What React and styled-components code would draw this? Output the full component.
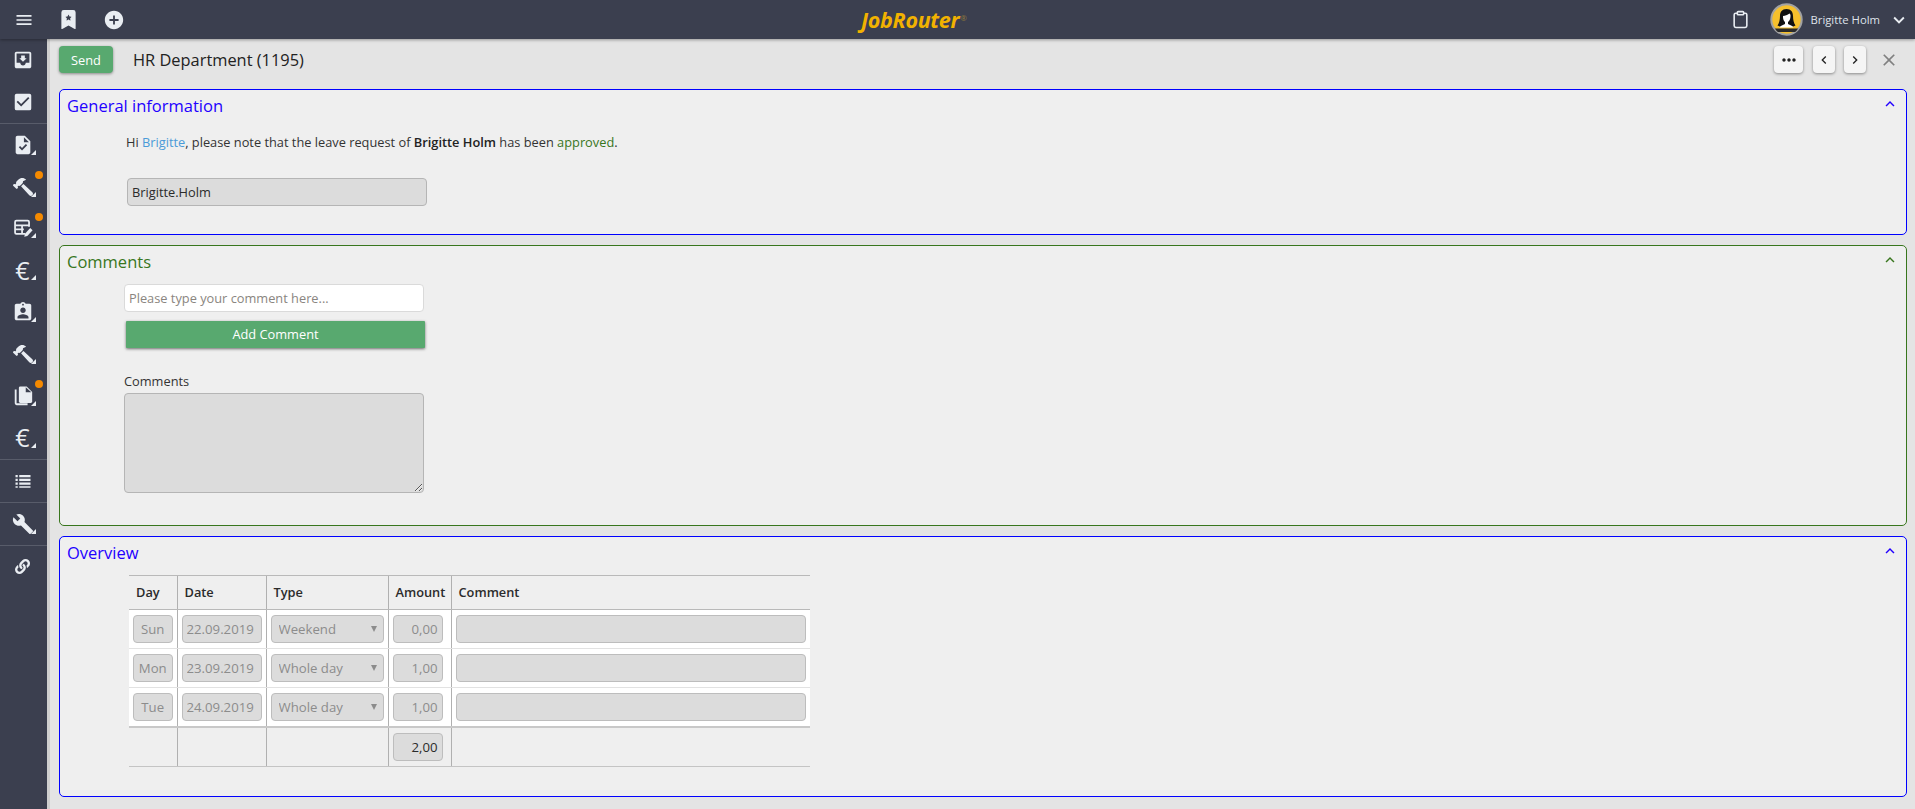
import styled, { createGlobalStyle } from 'styled-components';
import {
  MdMenu,
  MdMoveToInbox,
  MdCheckBox,
  MdTask,
  MdAssignmentInd,
  MdBuild,
  MdAddCircle,
  MdKeyboardArrowDown,
  MdKeyboardArrowUp,
  MdKeyboardArrowLeft,
  MdKeyboardArrowRight,
  MdMoreHoriz,
  MdClose,
} from 'react-icons/md';
import { BsBookmarkStarFill } from 'react-icons/bs';
import { FaHammer, FaLink } from 'react-icons/fa';
import { LuClipboard } from 'react-icons/lu';

const GlobalStyle = createGlobalStyle`
  html, body {
    margin: 0;
    height: 100%;
    overflow: hidden;
    background: #e4e4e4;
    font-family: "Open Sans", "Liberation Sans", sans-serif;
    font-size: 12.8px;
    color: #2b2b2b;
  }
  * { box-sizing: border-box; }
`;

const Page = styled.div`
  display: flex;
  flex-direction: column;
  height: 809px;
`;

const TopBar = styled.header`
  display: grid;
  grid-template-columns: 861px auto 1fr;
  align-items: center;
  height: 39px;
  flex: none;
  background: #3b3f4f;
  color: #e9edf2;
  box-shadow: 0 1px 3px rgba(0, 0, 0, 0.35);
  position: relative;
  z-index: 2;
`;

const TopLeft = styled.div`
  display: flex;
  align-items: center;
`;

const TopSlot = styled.div`
  display: flex;
  align-items: center;
  justify-content: center;
  width: ${(props) => props.$width}px;
  margin-right: ${(props) => props.$gap || 0}px;
  font-size: ${(props) => props.$size}px;
`;

const Logo = styled.div`
  font-size: 21.5px;
  font-weight: 700;
  font-style: italic;
  color: #f2b200;
  letter-spacing: -0.3px;

  sup {
    font-size: 8px;
    font-style: normal;
    font-weight: 400;
    color: #8f7a3a;
    margin-left: 1px;
    vertical-align: 7px;
    line-height: 0;
  }
`;

const TopRight = styled.div`
  display: flex;
  align-items: center;
  justify-content: flex-end;
  padding-right: 4px;
`;

const UserName = styled.span`
  font-size: 11.3px;
  margin: 0 7px;
  color: #dfe3ea;
`;

const Body = styled.div`
  display: flex;
  flex: 1;
  min-height: 0;
`;

const Sidebar = styled.nav`
  width: 50px;
  flex: none;
  background: #3b3f4f;
  border-right: 3px solid #cfcfcf;
`;

const SideGroup = styled.div`
  border-bottom: ${(props) => (props.$last ? 'none' : '1px solid #585c6a')};
`;

const SideItem = styled.div`
  position: relative;
  display: flex;
  align-items: center;
  justify-content: center;
  width: 47px;
  height: 41.9px;
  font-size: ${(props) => props.$size || 22}px;
  color: #e9edf2;
  padding-right: 2px;

  &::after {
    content: '';
    display: ${(props) => (props.$sub ? 'block' : 'none')};
    position: absolute;
    right: 11px;
    bottom: 11px;
    border-style: solid;
    border-width: 0 0 5px 5px;
    border-color: transparent transparent #e9edf2 transparent;
  }
`;

const Badge = styled.span`
  position: absolute;
  top: 5px;
  right: 4px;
  width: 8px;
  height: 8px;
  border-radius: 50%;
  background: #f58a00;
`;

const Euro = styled.span`
  font-size: 25px;
  line-height: 1;
  font-family: "Open Sans", sans-serif;
  color: #e9edf2;
`;

const Hammer = styled(FaHammer)`
  transform: scaleX(-1);
`;

const Main = styled.main`
  flex: 1;
  min-width: 0;
  padding: 7px 8px 0 9px;
`;

const Toolbar = styled.div`
  display: flex;
  align-items: center;
  height: 27px;
  margin-bottom: 16px;
`;

const SendButton = styled.button`
  width: 54px;
  height: 27px;
  border: 0;
  border-radius: 4px;
  background: #58a96f;
  color: #fff;
  font: inherit;
  box-shadow: 0 1px 3px rgba(0, 0, 0, 0.4);
`;

const Title = styled.h1`
  flex: 1;
  margin: 0 0 0 20px;
  font-size: 16.4px;
  font-weight: 400;
  color: #222;
`;

const ToolButton = styled.button`
  display: flex;
  align-items: center;
  justify-content: center;
  width: ${(props) => props.$width}px;
  height: 27px;
  margin-left: ${(props) => props.$gap}px;
  padding: 0;
  border: 0;
  border-radius: 4px;
  background: #f5f5f5;
  color: #222;
  font-size: ${(props) => props.$size || 16}px;
  box-shadow: 0 1px 3px rgba(0, 0, 0, 0.4);
`;

const CloseButton = styled.div`
  display: flex;
  justify-content: center;
  width: 23px;
  margin: 0 7px 0 11px;
  font-size: 20px;
  color: #808080;
`;

const Section = styled.section`
  height: ${(props) => props.$height}px;
  margin-bottom: 10px;
  border: 1px solid ${(props) => props.$color};
  border-radius: 5px;
  background: #efefef;
`;

const SectionHead = styled.div`
  display: flex;
  align-items: center;
  justify-content: space-between;
  height: 33px;
  padding: 0 7px;
  color: ${(props) => props.$color};

  h2 {
    margin: -3px 0 0;
    font-size: 16.5px;
    font-weight: 500;
  }

  svg {
    font-size: 18px;
    margin-top: -5px;
  }
`;

const Message = styled.p`
  margin: 10px 0 0 66px;
  height: 18px;
  line-height: 18px;
  color: #333;

  b {
    font-weight: 600;
    color: #222;
  }
`;

const Name = styled.span`
  color: #4b9bd8;
`;

const Approved = styled.span`
  color: #38761d;
`;

const Field = styled.input`
  display: block;
  width: 300px;
  height: 28px;
  padding: 0 4px;
  margin-left: ${(props) => props.$left}px;
  margin-top: ${(props) => props.$top}px;
  border: 1px solid ${(props) => (props.disabled ? '#b5b5b5' : '#dadada')};
  border-radius: 4px;
  background: ${(props) => (props.disabled ? '#dcdcdc' : '#fff')};
  color: #2b2b2b;
  font: inherit;
  opacity: 1;

  &::placeholder {
    color: #8a8580;
  }
`;

const AddButton = styled.button`
  display: block;
  width: 299px;
  height: 27px;
  margin: 9px 0 0 66px;
  padding: 0 0 2px;
  border: 0;
  border-radius: 1px;
  background: #58a96f;
  color: #fff;
  font: inherit;
  font-weight: 500;
  box-shadow: 0 1px 3px rgba(0, 0, 0, 0.55);
`;

const FieldLabel = styled.label`
  display: block;
  margin: 24px 0 3px 64px;
  height: 18px;
  line-height: 18px;
  color: #333;
`;

const Notes = styled.textarea`
  display: block;
  width: 300px;
  height: 100px;
  margin-left: 64px;
  border: 1px solid #b5b5b5;
  border-radius: 4px;
  background: #dcdcdc;
  font: inherit;
`;

const Table = styled.table`
  table-layout: fixed;
  width: 681px;
  margin: 5px 0 0 69px;
  border-collapse: collapse;
`;

const HeadCell = styled.th`
  height: 34px;
  padding: 0 6px 2px 7px;
  text-align: left;
  font-size: 12.8px;
  font-weight: 600;
  color: #2b2b2b;
  border-top: 1px solid #b9b9b9;
  border-bottom: 1px solid #b9b9b9;
  border-left: ${(props) => (props.$first ? '0' : '1px solid #b0b0b0')};
`;

const Cell = styled.td`
  height: ${(props) => (props.$total ? 40 : 39)}px;
  padding: 0 4px;
  background: ${(props) => (props.$total ? 'transparent' : '#fff')};
  border-left: ${(props) => (props.$first ? '0' : '1px solid #b0b0b0')};
  border-bottom: 1px solid ${(props) => (props.$total ? '#c4c4c4' : '#e2e2e2')};
`;

const TotalRow = styled.tr`
  border-top: 2px solid #c8c8c8;
`;

const CellField = styled.input`
  display: block;
  width: ${(props) => props.$width || '100%'};
  height: 28px;
  padding: 0 4px;
  border: 1px solid #bdbdbd;
  border-radius: 4px;
  background: #dcdcdc;
  font: inherit;
  font-size: 13.2px;
  color: ${(props) => (props.$strong ? '#2b2b2b' : '#8c8c8c')};
  text-align: ${(props) => props.$align || 'left'};
  opacity: 1;
`;

const TypeSelect = styled.select`
  display: block;
  width: 100%;
  height: 28px;
  padding: 0 0 0 7px;
  border: 1px solid #bdbdbd;
  border-radius: 4px;
  background: #dcdcdc;
  font: inherit;
  font-size: 13.2px;
  color: #8c8c8c;
  appearance: none;
  opacity: 1;
`;

const SelectWrap = styled.div`
  position: relative;

  &::after {
    content: '';
    position: absolute;
    right: 7px;
    top: 11px;
    border-style: solid;
    border-width: 6px 3px 0 3px;
    border-color: #8c8c8c transparent transparent transparent;
  }
`;

const rows = [
  { day: 'Sun', date: '22.09.2019', type: 'Weekend', amount: '0,00' },
  { day: 'Mon', date: '23.09.2019', type: 'Whole day', amount: '1,00' },
  { day: 'Tue', date: '24.09.2019', type: 'Whole day', amount: '1,00' },
];

function TableEditIcon() {
  return (
    <svg width="1em" height="1em" viewBox="0 0 24 24" fill="none" stroke="currentColor" strokeWidth="2">
      <path d="M15 18H5a1.500 1.500 0 0 1-1.500-1.500v-12A1.500 1.500 0 0 1 5 3h13a1.500 1.500 0 0 1 1.500 1.500V10" />
      <path d="M3.500 8.500h16M3.500 13h10M11.500 8.500V18" />
      <path d="M14 21.500l.8-3.500 6-6.500 2.700 2.500-6 6.500z" fill="currentColor" stroke="none" />
    </svg>
  );
}

function FilesIcon() {
  return (
    <svg width="1em" height="1em" viewBox="0 0 24 24" fill="currentColor">
      <path d="M3 5h2v15h12v2H5a2 2 0 0 1-2-2z" />
      <path d="M9 1.500h7l6 6V18a1.500 1.500 0 0 1-1.500 1.500H9A1.500 1.500 0 0 1 7.500 18V3A1.500 1.500 0 0 1 9 1.500z" />
      <path d="M15 2.500v5.500h6z" fill="#3b3f4f" />
    </svg>
  );
}

function ListIcon() {
  return (
    <svg width="1em" height="1em" viewBox="0 0 24 24" fill="currentColor">
      <path d="M2 4h3v3H2zM7 4h15v3H7zM2 9h3v3H2zM7 9h15v3H7zM2 14h3v3H2zM7 14h15v3H7zM2 19h3v2H2zM7 19h15v2H7z" />
    </svg>
  );
}

function Avatar() {
  return (
    <svg width="33" height="33" viewBox="0 0 33 33">
      <circle cx="16.5" cy="16.5" r="15.200" fill="#f6c02c" stroke="#a2a2a2" strokeWidth="2" />
      <path
        d="M16.500 6c-4.500 0-6.500 3-6.500 7 0 4-1 7.500-2.500 9.500l3.500 1.500h11l3.500-1.500c-1.500-2-2.500-5.500-2.500-9.500 0-4-2-7-6.500-7z"
        fill="#111"
      />
      <path
        d="M13 13c2 0 4.500-1 6.500-2.500 1 .8 1 1.500 1 2.500 0 3-1 5-2.500 6v2c2 1 4.500 1.500 5.500 3.500H9.500c1-2 3.500-2.500 5.500-3.500v-2c-1.500-1-2.200-3.500-2-6z"
        fill="#fff"
      />
      <path d="M5 25.500h23c-1 1.800-2 3-3 3.500H8c-1-.5-2-1.700-3-3.500z" fill="#2a2a2a" />
    </svg>
  );
}

export default function App() {
  return (
    <Page>
      <GlobalStyle />
      <TopBar>
        <TopLeft>
          <TopSlot $width={47} $size={20}>
            <MdMenu />
          </TopSlot>
          <TopSlot $width={43} $size={19}>
            <BsBookmarkStarFill />
          </TopSlot>
          <TopSlot $width={47} $size={22}>
            <MdAddCircle />
          </TopSlot>
        </TopLeft>
        <Logo>
          JobRouter<sup>®</sup>
        </Logo>
        <TopRight>
          <TopSlot $width={30} $size={19} $gap={15}>
            <LuClipboard />
          </TopSlot>
          <TopSlot $width={33} $size={12}>
            <Avatar />
          </TopSlot>
          <UserName>Brigitte Holm</UserName>
          <TopSlot $width={24} $size={22}>
            <MdKeyboardArrowDown />
          </TopSlot>
        </TopRight>
      </TopBar>
      <Body>
        <Sidebar>
          <SideGroup>
            <SideItem>
              <MdMoveToInbox />
            </SideItem>
            <SideItem>
              <MdCheckBox />
            </SideItem>
          </SideGroup>
          <SideGroup>
            <SideItem $sub>
              <MdTask />
            </SideItem>
            <SideItem $sub $size={20}>
              <Hammer />
              <Badge />
            </SideItem>
            <SideItem $sub $size={21}>
              <TableEditIcon />
              <Badge />
            </SideItem>
            <SideItem $sub>
              <Euro>€</Euro>
            </SideItem>
            <SideItem $sub>
              <MdAssignmentInd />
            </SideItem>
            <SideItem $sub $size={20}>
              <Hammer />
            </SideItem>
            <SideItem $sub>
              <FilesIcon />
              <Badge />
            </SideItem>
            <SideItem $sub>
              <Euro>€</Euro>
            </SideItem>
          </SideGroup>
          <SideGroup>
            <SideItem $size={18}>
              <ListIcon />
            </SideItem>
          </SideGroup>
          <SideGroup>
            <SideItem $sub>
              <MdBuild />
            </SideItem>
          </SideGroup>
          <SideGroup $last>
            <SideItem $size={15}>
              <FaLink />
            </SideItem>
          </SideGroup>
        </Sidebar>
        <Main>
          <Toolbar>
            <SendButton>Send</SendButton>
            <Title>HR Department (1195)</Title>
            <ToolButton $width={29} $gap={0} $size={20}>
              <MdMoreHoriz />
            </ToolButton>
            <ToolButton $width={22} $gap={10} $size={16}>
              <MdKeyboardArrowLeft />
            </ToolButton>
            <ToolButton $width={22} $gap={9} $size={16}>
              <MdKeyboardArrowRight />
            </ToolButton>
            <CloseButton>
              <MdClose />
            </CloseButton>
          </Toolbar>

          <Section $color="#0000ff" $height={146}>
            <SectionHead $color="#2200ff">
              <h2>General information</h2>
              <MdKeyboardArrowUp />
            </SectionHead>
            <Message>
              Hi <Name>Brigitte</Name>, please note that the leave request of <b>Brigitte Holm</b> has
              been <Approved>approved</Approved>.
            </Message>
            <Field $left={67} $top={27} disabled value="Brigitte.Holm" readOnly />
          </Section>

          <Section $color="#38761d" $height={281}>
            <SectionHead $color="#38761d">
              <h2>Comments</h2>
              <MdKeyboardArrowUp />
            </SectionHead>
            <Field $left={64} $top={5} placeholder="Please type your comment here..." />
            <AddButton>Add Comment</AddButton>
            <FieldLabel>Comments</FieldLabel>
            <Notes disabled />
          </Section>

          <Section $color="#0000ff" $height={261}>
            <SectionHead $color="#2200ff">
              <h2>Overview</h2>
              <MdKeyboardArrowUp />
            </SectionHead>
            <Table>
              <colgroup>
                <col width="48" />
                <col width="89" />
                <col width="122" />
                <col width="63" />
                <col width="359" />
              </colgroup>
              <thead>
                <tr>
                  <HeadCell $first>Day</HeadCell>
                  <HeadCell>Date</HeadCell>
                  <HeadCell>Type</HeadCell>
                  <HeadCell>Amount</HeadCell>
                  <HeadCell>Comment</HeadCell>
                </tr>
              </thead>
              <tbody>
                {rows.map((row) => (
                  <tr key={row.date}>
                    <Cell $first>
                      <CellField disabled value={row.day} $align="center" readOnly />
                    </Cell>
                    <Cell>
                      <CellField disabled value={row.date} readOnly />
                    </Cell>
                    <Cell>
                      <SelectWrap>
                        <TypeSelect disabled value={row.type} onChange={() => {}}>
                          <option>Weekend</option>
                          <option>Whole day</option>
                        </TypeSelect>
                      </SelectWrap>
                    </Cell>
                    <Cell>
                      <CellField disabled value={row.amount} $align="right" $width="50px" readOnly />
                    </Cell>
                    <Cell>
                      <CellField disabled value="" readOnly />
                    </Cell>
                  </tr>
                ))}
                <TotalRow>
                  <Cell $total $first />
                  <Cell $total />
                  <Cell $total />
                  <Cell $total>
                    <CellField disabled value="2,00" $align="right" $width="50px" $strong readOnly />
                  </Cell>
                  <Cell $total />
                </TotalRow>
              </tbody>
            </Table>
          </Section>
        </Main>
      </Body>
    </Page>
  );
}
